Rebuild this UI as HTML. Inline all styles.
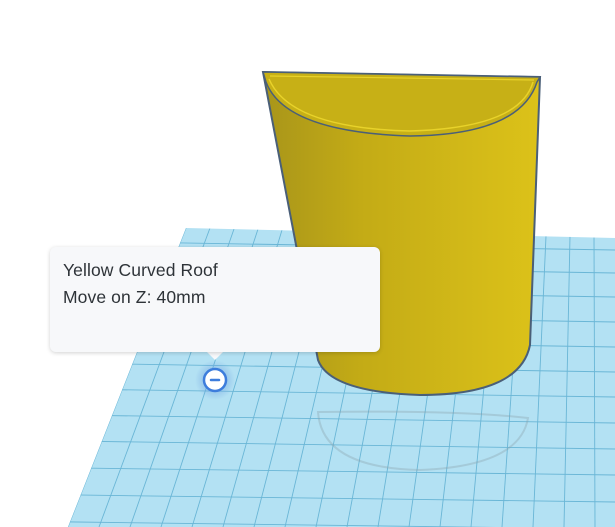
<!DOCTYPE html>
<html><head><style>
html,body{margin:0;padding:0;width:615px;height:527px;overflow:hidden;background:#fff;font-family:"Liberation Sans",sans-serif}
.tip{position:absolute;left:50px;top:247px;width:330px;height:105px;background:#f7f8fa;border-radius:6px;box-shadow:0 1px 4px rgba(0,0,0,.18);}
.tip div{position:absolute;left:13px;font-size:17.5px;color:#2e3338;letter-spacing:0.1px}
</style></head><body>
<svg width="615" height="527" style="position:absolute;left:0;top:0">
<defs>
<clipPath id="g"><polygon points="186,228 615,238 615,527 68,527"/></clipPath>
<linearGradient id="body" x1="0" x2="1" y1="0" y2="0">
<stop offset="0" stop-color="#a8951a"/><stop offset="0.35" stop-color="#c3ab16"/><stop offset="1" stop-color="#dcc219"/></linearGradient>
<radialGradient id="halo"><stop offset="0.5" stop-color="#6fa0e0" stop-opacity=".45"/><stop offset="1" stop-color="#6fa0e0" stop-opacity="0"/></radialGradient>
</defs>
<polygon points="186,228 615,238 615,527 68,527" fill="#b3e1f3"/>
<g clip-path="url(#g)" stroke="#6ab6d6" stroke-width="0.9">
<line x1="186" y1="228" x2="68" y2="527"/><line x1="210" y1="228" x2="99" y2="527"/><line x1="234" y1="229" x2="130" y2="527"/><line x1="258" y1="229" x2="161" y2="527"/><line x1="282" y1="230" x2="192" y2="527"/><line x1="306" y1="230" x2="223" y2="527"/><line x1="330" y1="231" x2="254" y2="527"/><line x1="354" y1="231" x2="285" y2="527"/><line x1="378" y1="232" x2="316" y2="527"/><line x1="402" y1="232" x2="347" y2="527"/><line x1="426" y1="233" x2="378" y2="527"/><line x1="450" y1="234" x2="409" y2="527"/><line x1="474" y1="234" x2="440" y2="527"/><line x1="498" y1="235" x2="471" y2="527"/><line x1="522" y1="235" x2="502" y2="527"/><line x1="546" y1="236" x2="533" y2="527"/><line x1="570" y1="236" x2="564" y2="527"/><line x1="594" y1="237" x2="595" y2="527"/><line x1="618" y1="238" x2="626" y2="527"/>
<line x1="0" y1="240" x2="615" y2="250"/><line x1="0" y1="263" x2="615" y2="273"/><line x1="0" y1="287" x2="615" y2="297"/><line x1="0" y1="312" x2="615" y2="322"/><line x1="0" y1="337" x2="615" y2="347"/><line x1="0" y1="362" x2="615" y2="372"/><line x1="0" y1="388" x2="615" y2="397"/><line x1="0" y1="414" x2="615" y2="423"/><line x1="0" y1="440" x2="615" y2="449"/><line x1="0" y1="467" x2="615" y2="475"/><line x1="0" y1="494" x2="615" y2="502"/><line x1="0" y1="521" x2="615" y2="529"/>
</g>
<path d="M318,412 Q322,468 420,470 Q520,466 528,418 Q460,410 318,412Z" fill="none" stroke="#8aa0aa" stroke-width="2" opacity="0.35"/>
<path d="M263,72 L540,77 L530,345 Q520,395 420,395 Q330,392 318,360 Z" fill="url(#body)" stroke="#4a5f78" stroke-width="2"/>
<path d="M263,72 L540,77 L537,82 Q520,135 410,136 Q285,132 266,82 Z" fill="#c7b016" stroke="#4a5f78" stroke-width="1.5"/>
<path d="M269,79 Q290,128 410,131 Q520,128 533,82" fill="none" stroke="#e8d22a" stroke-width="1.5"/>
<path d="M270,76 L534,80" fill="none" stroke="#e8d22a" stroke-width="1.2"/>
<path d="M207,352 L215,360 L223,352Z" fill="#f7f8fa"/>
<circle cx="215" cy="380" r="20" fill="url(#halo)"/>
<circle cx="215" cy="380" r="11" fill="#fff" stroke="#3d7ddc" stroke-width="2.5"/>
<line x1="211" y1="380" x2="219" y2="380" stroke="#3d7ddc" stroke-width="2.5" stroke-linecap="round"/>
</svg>
<div class="tip"><div style="top:13px">Yellow Curved Roof</div><div style="top:40px">Move on Z: 40mm</div></div>
</body></html>
